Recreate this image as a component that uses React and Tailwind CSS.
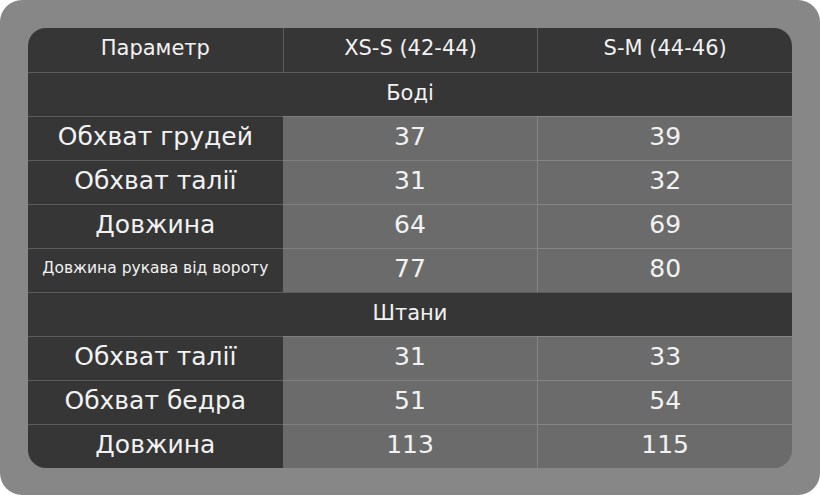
import React from "react";

const sections = [
  {
    title: "Боді",
    rows: [
      { label: "Обхват грудей", a: "37", b: "39" },
      { label: "Обхват талії", a: "31", b: "32" },
      { label: "Довжина", a: "64", b: "69" },
      { label: "Довжина рукава від вороту", a: "77", b: "80", small: true },
    ],
  },
  {
    title: "Штани",
    rows: [
      { label: "Обхват талії", a: "31", b: "33" },
      { label: "Обхват бедра", a: "51", b: "54" },
      { label: "Довжина", a: "113", b: "115" },
    ],
  },
];

const App = () => {
  return (
    <div className="w-[820px] h-[495px] bg-white">
      <div
        className="w-full h-full bg-[#878787] rounded-[22px] p-[28px]"
        style={{ fontFamily: '"DejaVu Sans", "Noto Sans", sans-serif' }}
      >
        <div className="rounded-[18px] overflow-hidden text-[#f2f2f2]">
          {/* Header */}
          <div className="grid grid-cols-3 h-[44px] bg-[#363636] text-[21px]">
            <div className="flex items-center justify-center pb-[2px]">Параметр</div>
            <div className="flex items-center justify-center pb-[2px] border-l border-[#5e5e5e]">XS-S (42-44)</div>
            <div className="flex items-center justify-center pb-[2px] border-l border-[#5e5e5e]">S-M (44-46)</div>
          </div>

          {sections.map((section) => (
            <div key={section.title}>
              <div className="h-[44px] flex items-center justify-center pb-[2px] bg-[#363636] border-t border-[#5c5c5c] text-[21px]">
                {section.title}
              </div>
              {section.rows.map((row, i) => (
                <div key={i} className="grid grid-cols-3 h-[44px] text-[25px]">
                  <div className="flex items-center justify-center pb-[3px] bg-[#363636] border-t border-[#5c5c5c]">
                    <span className={row.small ? "text-[15.5px]" : ""}>{row.label}</span>
                  </div>
                  <div className="flex items-center justify-center pb-[3px] bg-[#6b6b6b] border-t border-[#7e7e7e]">
                    {row.a}
                  </div>
                  <div className="flex items-center justify-center pb-[3px] bg-[#6b6b6b] border-t border-l border-[#868686]">
                    {row.b}
                  </div>
                </div>
              ))}
            </div>
          ))}
        </div>
      </div>
    </div>
  );
};

export default App;
